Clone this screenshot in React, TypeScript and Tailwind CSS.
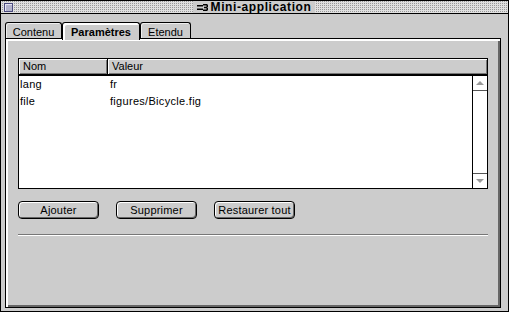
import React from "react";

const ui = "font-['Liberation_Sans',Arial,sans-serif]";

function CloseBox() {
  return (
    <div className="ml-[3px] h-[9px] w-[9px] border border-[#4b4b7d] bg-[#b4b4cc] shadow-[inset_1px_1px_0_#e6e6f5]" />
  );
}

function AppIcon() {
  // little "tool" glyph next to the window title
  return (
    <svg width="12" height="9" viewBox="0 0 12 9" className="mr-[2px]">
      <rect x="0" y="2" width="6" height="1.5" fill="#000" />
      <rect x="0" y="5.5" width="6" height="1.5" fill="#000" />
      <path d="M6 1 H10 L11 2 V4 L10 4.5 L11 5 V7 L10 8 H6 V6.5 H9.5 V5.2 H7 V3.8 H9.5 V2.5 H6 Z" fill="#000" />
    </svg>
  );
}

function Tab({ label, active, w }: { label: string; active?: boolean; w: string }) {
  if (active) {
    return (
      <div
        className={`relative z-10 -mb-[2px] flex h-[18px] ${w} items-start justify-center rounded-t-[3px] border border-b-0 border-black bg-[#cccccc] pt-[1px] shadow-[inset_2px_2px_0_#fff] text-[11px] font-bold text-black`}
      >
        {label}
      </div>
    );
  }
  return (
    <div
      className={`flex h-[16px] ${w} items-start justify-center rounded-t-[3px] border border-b-0 border-black bg-[#cccccc] pt-[1px] shadow-[inset_1px_1px_0_#eee] text-[11px] text-black`}
    >
      {label}
    </div>
  );
}

function Btn({ label }: { label: string }) {
  return (
    <button
      type="button"
      className="flex h-[18px] w-[81px] items-center justify-center rounded-[4px] border border-black bg-[#cccccc] text-[11px] tracking-[0.2px] text-black shadow-[inset_1px_1px_0_#fff,inset_-1px_-1px_0_#666]"
    >
      {label}
    </button>
  );
}

const rows = [
  { k: "lang", v: "fr" },
  { k: "file", v: "figures/Bicycle.fig" },
];

export default function App() {
  return (
    <div className={`${ui} flex h-[312px] w-[509px] flex-col border border-black bg-[#cccccc] text-black`}>
      {/* title bar */}
      <div className="relative flex h-[13px] shrink-0 items-center border-b border-black bg-[#dddddd] bg-[conic-gradient(#999999_0_25%,#e0e0e0_0_100%)] bg-[length:2px_2px]">
        <CloseBox />
        <div className="absolute left-[192px] top-0 flex h-[12px] w-[122px] items-center justify-center bg-[#cccccc]">
          <AppIcon />
          <span className="text-[12px] font-bold leading-none tracking-[0.6px]">Mini-application</span>
        </div>
      </div>

      {/* body */}
      <div className="flex flex-1 flex-col pb-[3px] pl-[4px] pr-[7px] pt-[8px]">
        <div className="flex items-end">
          <Tab label="Contenu" w="w-[57px]" />
          <Tab label="Paramètres" active w="w-[78px]" />
          <Tab label="Etendu" w="w-[51px]" />
        </div>

        <div className="flex flex-1 flex-col border border-black px-[12px] pt-[19px] shadow-[inset_2px_2px_0_#fff,inset_-2px_-2px_0_#666]">
          {/* table */}
          <div className="flex h-[131px] flex-col border border-black bg-white">
            <div className="flex h-[17px] shrink-0 border-b-2 border-black bg-[#cccccc] text-[11px]">
              <div className="flex w-[89px] items-center border-r border-black pl-[4px] shadow-[inset_1px_1px_0_#fff,inset_-1px_-1px_0_#777]">
                Nom
              </div>
              <div className="flex flex-1 items-center pl-[4px] shadow-[inset_1px_1px_0_#fff,inset_-1px_-1px_0_#777]">
                Valeur
              </div>
            </div>
            <div className="flex flex-1">
              <div className="flex-1 text-[11px] tracking-[0.3px]">
                {rows.map((r) => (
                  <div key={r.k} className="flex h-[17px] items-center">
                    <span className="w-[89px] pl-[1px]">{r.k}</span>
                    <span className="pl-[2px]">{r.v}</span>
                  </div>
                ))}
              </div>
              {/* scrollbar */}
              <div className="flex w-[15px] flex-col border-l border-black bg-white">
                <div className="flex h-[15px] items-center justify-center border-b border-[#555]">
                  <svg width="8" height="4" viewBox="0 0 8 4">
                    <path d="M0 4 L4 0 L8 4 Z" fill="#999" />
                  </svg>
                </div>
                <div className="flex-1" />
                <div className="flex h-[15px] items-center justify-center border-t border-[#555]">
                  <svg width="8" height="4" viewBox="0 0 8 4">
                    <path d="M0 0 L8 0 L4 4 Z" fill="#999" />
                  </svg>
                </div>
              </div>
            </div>
          </div>

          {/* buttons */}
          <div className="mt-[12px] flex gap-[17px]">
            <Btn label="Ajouter" />
            <Btn label="Supprimer" />
            <Btn label="Restaurer tout" />
          </div>

          {/* separator */}
          <div className="mt-[15px] h-[2px] border-t border-[#777] bg-white" />
        </div>
      </div>
    </div>
  );
}
